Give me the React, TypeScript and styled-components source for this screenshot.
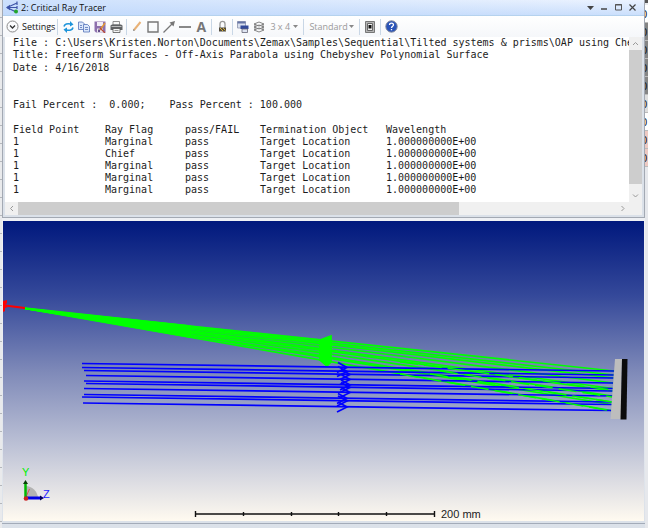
import React from "react";
import styled, { createGlobalStyle } from "styled-components";

const GlobalStyle = createGlobalStyle`
  *, *::before, *::after { box-sizing: border-box; }
  body { margin: 0; background: #dcdfe4; font-family: "Open Sans", "Noto Sans", sans-serif; font-size: 9px; color: #111; }
  button, select { font: inherit; color: inherit; border: 0; background: none; padding: 0; margin: 0; }
  svg { display: block; }
`;

const Desktop = styled.div`
  display: flex;
  min-height: 100vh;
  overflow: hidden;
`;

const GridSliver = styled.div`
  flex: 0 0 2px;
  background: repeating-linear-gradient(#e9eaec 0 17px, #b4b7bc 17px 18px);
`;

const CellSliver = styled.div`
  flex: 0 0 3px;
  overflow: hidden;
  background: #e6e8ec;
  padding-top: 2px;
  border-top: 3px solid #555;
`;

const SheetCell = styled.div<{ $fill: string }>`
  height: 18px;
  background: ${(p) => p.$fill};
  border-bottom: 1px solid #bbb;
  font-size: 11px;
  line-height: 18px;
  text-indent: -4px;
  white-space: nowrap;
`;

const Main = styled.main`
  flex: 1;
  min-width: 0;
  display: flex;
  flex-direction: column;
  background: linear-gradient(#eef0f4 50%, #dbe1e9);
`;

const Window = styled.section`
  background: #dbe1e9;
  border: 1px solid #a3a9b3;
  border-top: 0;
  padding: 0 2px 2px;
  margin-bottom: 3px;
`;

const TitleBar = styled.header`
  display: flex;
  align-items: center;
  height: 16px;
  margin: 0 -2px;
  padding: 0 5px 0 3px;
  border-bottom: 1px solid #b5d2ee;
  background: linear-gradient(to right, rgba(196, 219, 252, 0.8), rgba(226, 237, 254, 0.4)), linear-gradient(#f2f7ff, #bcd6fb);
`;

const Title = styled.h1`
  flex: 1;
  margin: 0 0 0 2px;
  font-size: 9px;
  font-weight: 400;
  line-height: 14px;
`;

const WindowButton = styled.button`
  width: 14px;
  height: 14px;
  display: grid;
  place-items: center;
`;

const Toolbar = styled.div`
  display: flex;
  align-items: center;
  height: 21px;
  margin: 0 -2px;
  padding-left: 1px;
  background: linear-gradient(#fff, #f5f7fa);
`;

const ToolGroup = styled.div`
  display: flex;
  align-items: center;
  height: 16px;
  padding: 0 2px;
  border-right: 1px solid #c9d7e6;
  &:last-child { border-right: 0; }
`;

const ToolButton = styled.button`
  display: flex;
  align-items: center;
  justify-content: center;
  gap: 3px;
  min-width: 16px;
  height: 16px;
  white-space: nowrap;
`;

const ToolSelect = styled.label<{ $width: number }>`
  display: flex;
  align-items: center;
  padding: 0 3px;
  color: #9a9a9a;
  select { appearance: none; width: ${(p) => p.$width}px; height: 16px; }
`;

const Report = styled.div`
  display: grid;
  grid-template-columns: minmax(0, 1fr) 13px;
  background: #fff;
`;

const ReportText = styled.div`
  padding: 0 0 6px 8px;
  overflow: hidden;
  white-space: pre;
  font-family: "DejaVu Sans Mono", "Liberation Mono", monospace;
  font-size: 10px;
  line-height: 12px;
  color: #1c1c1c;
`;

const Line = styled.p<{ $before?: number }>`
  margin: ${(p) => p.$before ?? 0}px 0 0;
`;

const RayTable = styled.table`
  margin-top: 13px;
  border-collapse: collapse;
  table-layout: fixed;
  width: 480px;
  th, td { padding: 0; text-align: left; font-weight: 400; height: 12px; }
  th:nth-child(1) { width: 92px; }
  th:nth-child(2) { width: 80px; }
  th:nth-child(3) { width: 75px; }
  th:nth-child(4) { width: 126px; }
`;

const ScrollTrack = styled.div<{ $horizontal?: boolean }>`
  display: flex;
  flex-direction: ${(p) => (p.$horizontal ? "row" : "column")};
  background: #f0f0f0;
  min-height: 13px;
`;

const ScrollButton = styled.button`
  flex: 0 0 13px;
  display: grid;
  place-items: center;
`;

const ScrollThumb = styled.div<{ $grow: number }>`
  flex: ${(p) => p.$grow} 1 0;
  background: #cdcdcd;
`;

const ScrollRest = styled.div<{ $grow: number }>`
  flex: ${(p) => p.$grow} 1 0;
`;

const Viewport = styled.section`
  margin: 0 1px;
  background: linear-gradient(#00187d, #35499a 25%, #7e89b8 50%, #bdc2d6 75%, #fffaf0);
  svg { width: 100%; height: auto; }
`;

const Footer = styled.div`
  height: 3px;
  border-bottom: 1px solid #a3abb8;
  background: #dbe1e9;
`;

const Chevron = ({ d }: { d: string }) => (
  <svg width="7" height="7" viewBox="0 0 7 7" fill="none" stroke="#999" strokeWidth="1"><path d={d} /></svg>
);

const Caret = () => (
  <svg width="5" height="3" viewBox="0 0 5 3" fill="#888"><path d="M0 0H5L2.5 3Z" /></svg>
);

const icons = {
  app: (
    <svg width="13" height="13" viewBox="0 0 13 13" fill="none" stroke="#3e55a8" strokeWidth="1.2">
      <path d="M1 6.5 11 2M1 6.5H11M1 6.5 9 10.5" /><path d="M0 6.500 4 3.700V9.300Z" fill="#3e55a8" stroke="none" />
      <path d="M11 .5V4M11 5V8" /><circle cx="10" cy="10.500" r="2" fill="#23a52b" stroke="none" />
    </svg>
  ),
  expand: (
    <svg width="13" height="13" viewBox="0 0 13 13" fill="none" stroke="#8a8a8a"><circle cx="6.500" cy="6.500" r="5.500" /><path d="m4 5.500 2.500 2.500L9 5.500" stroke="#333" strokeWidth="1.300" /></svg>
  ),
  refresh: (
    <svg width="11" height="12" viewBox="0 0 11 12" fill="none" stroke="#1d94da" strokeWidth="1.600">
      <path d="M1 5.500C1.500 3 4.500 2.200 7.500 3M10 6.500C9.500 9 6.500 9.800 3.500 9" /><path d="M7 0 10.500 3.500 7 5.500ZM4 12 .5 8.500 4 6.500Z" fill="#1d94da" stroke="none" />
    </svg>
  ),
  copy: (
    <svg width="12" height="12" viewBox="0 0 12 12" fill="#dbe7fb" stroke="#5573b9" strokeWidth=".8">
      <path d="M.5 1H4.500L6.500 3V8.500H.5Z" /><path d="M5.500 3.500H9.500L11.500 5.500V11H5.500Z" /><path d="M7 6.500H10M7 8.500H10M2 4.500H4M2 6.500H4" />
    </svg>
  ),
  save: (
    <svg width="12" height="12" viewBox="0 0 12 12"><path d="M.5.500H11.500V11.500H2L.5 10Z" fill="#8d70ad" /><path d="M3 1H9V5H3Z" fill="#f1edf6" /><path d="M3 7.500H9V11.500H3Z" fill="#e8e4ee" /><path d="M4 8.500H6V11H4Z" fill="#66508a" /><path d="m6 9 5-7" stroke="#e49835" strokeWidth="1.500" /><path d="m6 7 5 5" stroke="#b94936" strokeWidth="1.200" /></svg>
  ),
  print: (
    <svg width="13" height="12" viewBox="0 0 13 12"><path d="M3 .5H9.500V4H3Z" fill="#f8f8f8" stroke="#777" strokeWidth=".8" /><path d="M.5 4.500 2 3.500H11L12.500 4.500V9H.5Z" fill="#606365" /><path d="M1.500 5.500H11.500" stroke="#bbb" /><path d="M3 7.500H10V11.500H3Z" fill="#f5f5f5" stroke="#555" strokeWidth=".8" /><path d="M4.500 9.500H8.500" stroke="#999" /></svg>
  ),
  pencil: (
    <svg width="10" height="11" viewBox="0 0 10 11"><path d="M2 9 8.500 1" stroke="#e9b277" strokeWidth="2" /><path d="m1 10 .5-2L3 9.300Z" fill="#777" /></svg>
  ),
  box: <svg width="12" height="12" viewBox="0 0 12 12" fill="none" stroke="#777" strokeWidth="1.400"><path d="M1 1H11V11H1Z" /></svg>,
  arrow: <svg width="12" height="12" viewBox="0 0 12 12"><path d="M.5 11.500 9 3" stroke="#777" strokeWidth="1.200" /><path d="M12 0 10.500 5.500 6.500 1.500Z" fill="#777" /></svg>,
  dash: <svg width="12" height="12" viewBox="0 0 12 12"><path d="M0 6H12" stroke="#888" strokeWidth="2" /></svg>,
  lock: (
    <svg width="9" height="13" viewBox="0 0 9 13"><path d="M2 8V4C2 .5 7 .5 7 4V8" fill="none" stroke="#999" strokeWidth="1.300" /><path d="M1 7.500H8V11.500H1Z" fill="#514b3e" /><path d="m2 8 3 3M5 8l2.500 2.500" stroke="#d5af36" /></svg>
  ),
  windows: (
    <svg width="12" height="12" viewBox="0 0 12 12"><path d="M.5.500H8.500V7H.5Z" fill="#d9e0ee" stroke="#8a93ad" strokeWidth=".8" /><path d="M.5.500H8.500V2.500H.5Z" fill="#6675a5" /><path d="M3.500 4.500H11.500V8H3.500Z" fill="#324a9a" /><path d="M5 8H10.500V11.500H5Z" fill="#dfe5f2" stroke="#667" strokeWidth=".8" /></svg>
  ),
  layers: (
    <svg width="12" height="12" viewBox="0 0 12 12" fill="none" stroke="#777" strokeWidth=".9"><path d="M1 3 6 1 11 3 6 5ZM1 6 6 4 11 6 6 8ZM1 9 6 7 11 9 6 11Z" /><path d="M2 3V9M10 3V9" /></svg>
  ),
  target: (
    <svg width="10" height="12" viewBox="0 0 10 12"><path d="M.5.500H9.500V11.500H.5Z" fill="#b5b5b5" stroke="#777" /><path d="M2.500 2.500H7.500V9.500H2.500Z" fill="#eee" stroke="#666" /><path d="M3.500 4H6.500V7.500H3.500Z" fill="#111" /></svg>
  ),
  help: (
    <svg width="13" height="13" viewBox="0 0 13 13"><circle cx="6.500" cy="6.500" r="5.700" fill="#2953b8" stroke="#858b9c" /><path d="M4.500 5C4.500 2.500 8.500 2.500 8.500 5 8.500 6.200 6.500 6.300 6.500 8M6.500 9V10.300" fill="none" stroke="#fff" strokeWidth="1.300" /></svg>
  ),
};

const Letter = styled.span`
  font: 700 14px/14px "Open Sans", sans-serif;
  color: #777;
`;

const sheetFills = ["#fff", "#858585", "#858585", "#858585", "#858585", "#ddd", "#fff", "#edc9c2", "#edc9c2"];
const rayFlags = ["Marginal", "Chief", "Marginal", "Marginal", "Marginal"];

const rays = [
  { x: 82, y: 363.5 }, { x: 82, y: 367.5 }, { x: 84, y: 370.5 }, { x: 86, y: 375.5 }, { x: 84, y: 381 },
  { x: 86, y: 383.5 }, { x: 84, y: 388.5 }, { x: 84, y: 394.5 }, { x: 82, y: 397 }, { x: 83, y: 403 },
];

const Layout3D = () => (
  <svg viewBox="3 221 641 300" role="img" aria-label="Ray layout of the off-axis parabola">
    <g stroke="#00ff00" strokeWidth="1.700">
      {rays.map((r) => <path key={r.y} d={`M25 308.500 L${614 - (r.y - 363) * 0.07} ${r.y + 7.5}`} />)}
      <path d="M25 308 320 339V358Z" fill="#00ff00" fillOpacity=".35" stroke="none" />
      <path d="M25 308 190 326V337Z" fill="#00ff00" />
      <path d="M320 340 331 336V362L327 366 320 360Z" fill="#00ff00" />
    </g>
    <g stroke="#0000ff" strokeWidth="1.700" fill="none">
      {rays.map((r) => <path key={r.y} d={`M${r.x} ${r.y} L${614 - (r.y - 363) * 0.07} ${r.y + 7.5}`} />)}
      {rays.map((r, i) => {
        const tip = 347 + (i > 1 && i < 7 ? 3 : 0);
        return <path key={r.y} d={`M${tip - 9} ${r.y - 1} L${tip} ${r.y + 4} L${tip - 10} ${r.y + 9}`} />;
      })}
    </g>
    <g stroke="#00ff00" strokeWidth="1.400">
      <path d="M400 374 612 411M430 374 612 402M440 371 612 397M400 362 612 390" strokeDasharray="18 6" />
    </g>
    <path d="M615 359H622L621 419H610.500Z" fill="#bdbdbd" />
    <path d="M622 359H627.500L626.500 419.500H620.500Z" fill="#0b0b0b" />
    <path d="M5 305.500 25 308" stroke="#f00" strokeWidth="2" />
    <path d="M3 301 7 300V303L5 305 8 307V307L5 308V311L3 312Z" fill="#f00" />
    <path d="M25.500 498V486A13 13 0 0 1 38 498Z" fill="#b3b3b3" />
    <path d="m25.500 498 4-9" stroke="#d55" />
    <path d="M25.500 498V484" stroke="#00b800" strokeWidth="2.500" />
    <path d="M25.500 480 28 484H23Z" fill="#073f07" />
    <path d="M26 498H40" stroke="#0000e6" strokeWidth="3" />
    <path d="m40 495.500 4 2.500-4 2.500Z" fill="#00005b" />
    <circle cx="26" cy="498.500" r="2.300" fill="#c22" />
    <text x="22" y="476" fontFamily="Liberation Sans, sans-serif" fontSize="11" fill="#00f000">Y</text>
    <text x="43" y="498" fontFamily="Liberation Sans, sans-serif" fontSize="11" fill="#2222ff">Z</text>
    <g stroke="#111" fill="none">
      <path d="M195 514H435" strokeWidth="1.600" />
      <path d="M195.500 511V517M243.500 512V516M291.500 512V516M338.500 512V516M386.500 512V516M434.500 511V517" strokeWidth="1.400" />
    </g>
    <text x="441" y="518" fontFamily="Liberation Sans, sans-serif" fontSize="11" fill="#222">200 mm</text>
  </svg>
);

export default function App() {
  return (
    <>
      <GlobalStyle />
      <Desktop>
        <GridSliver />
        <Main>
          <Window>
            <TitleBar>
              {icons.app}
              <Title>2: Critical Ray Tracer</Title>
              <WindowButton aria-label="Window menu"><svg width="7" height="4" viewBox="0 0 7 4"><path d="M0 0H7L3.500 4Z" fill="#444" /></svg></WindowButton>
              <WindowButton aria-label="Minimize"><svg width="6" height="7" viewBox="0 0 6 7"><path d="M0 5H6" stroke="#444" strokeWidth="1.500" /></svg></WindowButton>
              <WindowButton aria-label="Maximize"><svg width="7" height="7" viewBox="0 0 7 7"><path d="M.5.500H6.500V6H.5ZM0 1H7" fill="none" stroke="#555" /></svg></WindowButton>
              <WindowButton aria-label="Close"><svg width="7" height="7" viewBox="0 0 7 7"><path d="m.5.500 6 6m0-6-6 6" stroke="#444" strokeWidth="1.200" /></svg></WindowButton>
            </TitleBar>
            <Toolbar>
              <ToolGroup>
                <ToolButton>{icons.expand}Settings</ToolButton>
              </ToolGroup>
              <ToolGroup>
                <ToolButton aria-label="Refresh">{icons.refresh}</ToolButton>
                <ToolButton aria-label="Copy">{icons.copy}</ToolButton>
                <ToolButton aria-label="Save">{icons.save}</ToolButton>
                <ToolButton aria-label="Print">{icons.print}</ToolButton>
              </ToolGroup>
              <ToolGroup>
                <ToolButton aria-label="Draw">{icons.pencil}</ToolButton>
                <ToolButton aria-label="Rectangle">{icons.box}</ToolButton>
                <ToolButton aria-label="Arrow">{icons.arrow}</ToolButton>
                <ToolButton aria-label="Line">{icons.dash}</ToolButton>
                <ToolButton aria-label="Text"><Letter>A</Letter></ToolButton>
              </ToolGroup>
              <ToolGroup>
                <ToolButton aria-label="Lock">{icons.lock}</ToolButton>
              </ToolGroup>
              <ToolGroup>
                <ToolButton aria-label="Windows">{icons.windows}</ToolButton>
                <ToolButton aria-label="Layers">{icons.layers}</ToolButton>
                <ToolSelect $width={23}><select aria-label="Grid"><option>3 x 4</option></select><Caret /></ToolSelect>
              </ToolGroup>
              <ToolGroup>
                <ToolSelect $width={40}><select aria-label="Mode"><option>Standard</option></select><Caret /></ToolSelect>
              </ToolGroup>
              <ToolGroup>
                <ToolButton aria-label="Fit window">{icons.target}</ToolButton>
              </ToolGroup>
              <ToolGroup>
                <ToolButton aria-label="Help">{icons.help}</ToolButton>
              </ToolGroup>
            </Toolbar>
            <Report>
              <ReportText>
                <Line>{"File : C:\\Users\\Kristen.Norton\\Documents\\Zemax\\Samples\\Sequential\\Tilted systems & prisms\\OAP using Chebyshe"}</Line>
                <Line>Title: Freeform Surfaces - Off-Axis Parabola using Chebyshev Polynomial Surface</Line>
                <Line $before={1}>Date : 4/16/2018</Line>
                <Line $before={25}>{"Fail Percent :  0.000;    Pass Percent : 100.000"}</Line>
                <RayTable>
                  <thead>
                    <tr><th>Field Point</th><th>Ray Flag</th><th>pass/FAIL</th><th>Termination Object</th><th>Wavelength</th></tr>
                  </thead>
                  <tbody>
                    {rayFlags.map((flag, i) => (
                      <tr key={i}><td>1</td><td>{flag}</td><td>pass</td><td>Target Location</td><td>1.000000000E+00</td></tr>
                    ))}
                  </tbody>
                </RayTable>
              </ReportText>
              <ScrollTrack>
                <ScrollButton aria-label="Scroll up"><Chevron d="M1 5 3.500 2.500 6 5" /></ScrollButton>
                <ScrollThumb $grow={134} />
                <ScrollRest $grow={5} />
                <ScrollButton aria-label="Scroll down"><Chevron d="M1 2.500 3.500 5 6 2.500" /></ScrollButton>
              </ScrollTrack>
              <ScrollTrack $horizontal>
                <ScrollButton aria-label="Scroll left"><Chevron d="M5 1 2.500 3.500 5 6" /></ScrollButton>
                <ScrollThumb $grow={441} />
                <ScrollRest $grow={157} />
                <ScrollButton aria-label="Scroll right"><Chevron d="M2.500 1 5 3.500 2.500 6" /></ScrollButton>
              </ScrollTrack>
              <ScrollTrack />
            </Report>
          </Window>
          <Viewport><Layout3D /></Viewport>
          <Footer />
        </Main>
        <CellSliver>
          {sheetFills.map((fill, i) => <SheetCell key={i} $fill={fill}>0</SheetCell>)}
        </CellSliver>
      </Desktop>
    </>
  );
}
